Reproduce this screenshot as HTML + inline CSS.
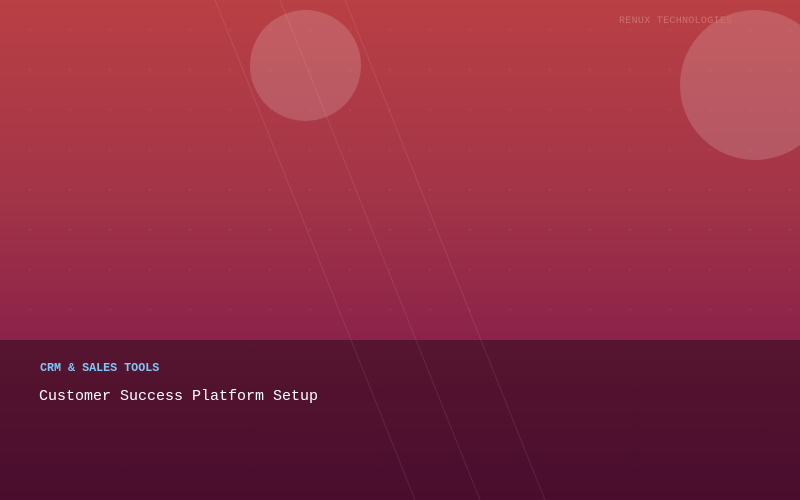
<!DOCTYPE html>
<html><head><style>
body{margin:0;width:800px;height:500px;overflow:hidden;position:relative;font-family:"Liberation Mono",monospace;
background:linear-gradient(180deg,#b94044 0%,#a23448 40%,#8b2249 68%);}
.dots{position:absolute;left:0;top:0;width:800px;height:340px;
background-image:radial-gradient(circle,rgba(255,255,255,0.05) 1px,transparent 1.5px);background-size:40px 40px;background-position:10px 10px;}
.c{position:absolute;border-radius:50%;background:rgba(255,255,255,0.16);}
.panel{position:absolute;left:0;top:340px;width:800px;height:160px;background:linear-gradient(180deg,#561530,#4a0d2d);}
.t{position:absolute;white-space:nowrap;}
</style></head><body>
<div class="dots"></div>
<div class="c" style="left:250px;top:10px;width:111px;height:111px"></div>
<div class="c" style="left:680px;top:10px;width:150px;height:150px"></div>
<div class="panel"></div>
<svg style="position:absolute;left:0;top:0" width="800" height="500">
<g stroke="rgba(255,255,255,0.09)" stroke-width="1">
<line x1="215" y1="0" x2="415" y2="500"/>
<line x1="280" y1="0" x2="480" y2="500"/>
<line x1="345" y1="0" x2="545" y2="500"/>
</g></svg>
<div class="t" style="left:619px;top:16px;font-size:10px;letter-spacing:0.3px;color:#cc7070">RENUX TECHNOLOGIES</div>
<div class="t" style="left:40px;top:361px;font-size:11.7px;font-weight:bold;color:#7ec8f8">CRM &amp; SALES TOOLS</div>
<div class="t" style="left:39px;top:388px;font-size:15px;color:#fff">Customer Success Platform Setup</div>
</body></html>
